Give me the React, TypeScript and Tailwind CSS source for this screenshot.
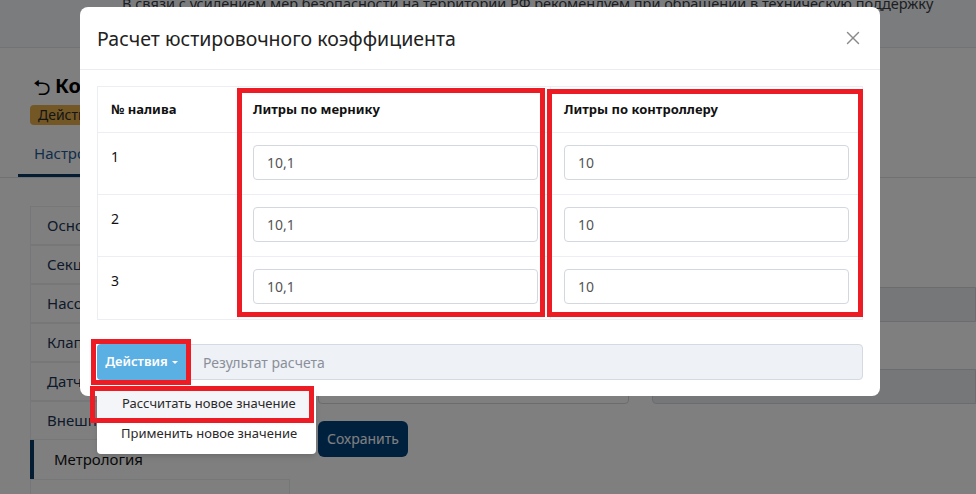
import { X } from 'lucide-react';

const rows = [
  { n: '1', a: '10,1', b: '10' },
  { n: '2', a: '10,1', b: '10' },
  { n: '3', a: '10,1', b: '10' },
];

const sideItems = ['Основные', 'Секции', 'Насосы', 'Клапаны', 'Датчики', 'Внешние'];

function BackgroundPage() {
  return (
    <div className="absolute inset-0 bg-white">
      <div className="h-[48px] bg-[#f6f8fc] border-b border-[#e4e7ec] overflow-hidden">
        <p className="pl-[122px] -mt-[7px] text-[14.5px] text-[#3a3d42] whitespace-nowrap">
          В связи с усилением мер безопасности на территории РФ рекомендуем при обращении в техническую поддержку
        </p>
      </div>
      <div className="pl-[33px] pt-[23px] flex items-center gap-1">
        <span className="text-[22px] text-black leading-none">⮌</span>
        <span className="text-[20px] font-bold text-black">Контроллер</span>
      </div>
      <div className="ml-[30px] mt-[4px] inline-block bg-[#e6b04a] rounded px-2 text-[14px] leading-[20px] text-[#2b2b2b]">
        Действует
      </div>
      <div className="mt-[16px] border-b border-[#dfe3ea] flex">
        <div className="ml-[18px] px-4 pb-[9px] border-b-[3px] border-[#0b3a66] text-[15px] text-[#1f5a96]">
          Настройки
        </div>
      </div>
      <div className="flex gap-[28px] pt-[28px]">
        <div className="ml-[30px] w-[260px] flex flex-col">
          {sideItems.map((s) => (
            <div key={s} className="h-[39px] border border-[#eceef2] flex items-center pl-[16px] text-[15px] text-[#1d3557]">
              {s}
            </div>
          ))}
          <div className="h-[39px] border-l-[4px] border-[#0b3a66] flex items-center pl-[20px] text-[15px] text-[#111] bg-white">
            Метрология
          </div>
          <div className="h-[39px] border border-[#eceef2]" />
        </div>
        <div className="flex-1 flex flex-col pt-[81px]">
          <div className="h-[35px] flex gap-[23px]">
            <div className="w-[311px] border border-[#d5d9e0] rounded" />
            <div className="flex-1 border border-[#d5d9e0] rounded-l bg-[#eceef2]" />
          </div>
          <div className="h-[35px] flex gap-[23px] mt-[47px]">
            <div className="w-[311px] border border-[#d5d9e0] rounded" />
            <div className="flex-1 border border-[#d5d9e0] rounded-l bg-[#eceef2]" />
          </div>
          <div className="mt-[17px]">
            <button className="h-[36px] w-[90px] rounded-md bg-[#01427c] text-white text-[14px]">Сохранить</button>
          </div>
        </div>
      </div>
    </div>
  );
}

export default function App() {
  return (
    <div className="relative w-[976px] h-[494px] overflow-hidden" style={{ fontFamily: '"Noto Sans", "Open Sans", sans-serif' }}>
      <BackgroundPage />
      <div className="absolute inset-0 bg-black/50" />

      <div className="absolute left-[80px] top-[7px] w-[800px] bg-white rounded-lg">
        <div className="h-[63px] border-b border-[#e9ecf1] flex items-center justify-between pl-[17px] pr-[16px]">
          <h2 className="text-[19.5px] text-[#222] mt-[1px]">Расчет юстировочного коэффициента</h2>
          <X className="w-[22px] h-[22px] text-[#8a8a8a]" strokeWidth={1.5} />
        </div>

        <div className="px-[17px] pt-[16px] pb-[16px]">
          <div className="relative border border-[#eceef4]">
            <div className="grid grid-cols-[140px_1fr_1fr] h-[46px] border-b border-[#eceef4] text-[13px] font-bold text-[#111]">
              <div className="flex items-center pl-[13px]">№ налива</div>
              <div className="flex items-center pl-[14px] border-l border-[#eceef4]">Литры по мернику</div>
              <div className="flex items-center pl-[13px] border-l border-[#eceef4]">Литры по контроллеру</div>
            </div>
            {rows.map((r, i) => (
              <div key={r.n} className={`grid grid-cols-[140px_1fr_1fr] h-[62px] text-[14px] ${i < 2 ? 'border-b border-[#eceef4]' : ''}`}>
                <div className="pl-[13px] pt-[13px] text-[#111]">{r.n}</div>
                <div className="pl-[14px] pr-[12px] pt-[12px] border-l border-[#eceef4]">
                  <div className="h-[35px] border border-[#d3d7de] rounded flex items-center pl-[13px] text-[#555]">{r.a}</div>
                </div>
                <div className="pl-[13px] pr-[13px] pt-[12px] border-l border-[#eceef4]">
                  <div className="h-[35px] border border-[#d3d7de] rounded flex items-center pl-[13px] text-[#555]">{r.b}</div>
                </div>
              </div>
            ))}
            <div className="absolute left-[139px] top-[1px] w-[308px] bottom-[2px] border-[5px] border-[#ed1c24]" />
            <div className="absolute left-[449px] top-[2px] right-[-1px] bottom-[2px] border-[5px] border-[#ed1c24]" />
          </div>

          <div className="relative mt-[24px] flex h-[36px]">
            <button className="w-[90px] bg-[#5aafe3] text-white text-[13px] font-semibold flex items-center justify-center gap-[3px] rounded-l">
              Действия
              <svg width="8" height="5" viewBox="0 0 8 5"><path d="M1 1h6L4 4z" fill="white" /></svg>
            </button>
            <div className="flex-1 bg-[#eef1f6] border border-[#d5d9e1] rounded-r flex items-center pl-[15px] text-[14px] text-[#8a8f99]">
              Результат расчета
            </div>
            <div className="absolute left-[-6px] top-[-5px] w-[100px] h-[46px] border-[5px] border-[#ed1c24]" />
          </div>
        </div>
      </div>

      <div className="absolute left-[97px] top-[386px] w-[219px] bg-white rounded shadow-md py-[4px] text-[13px] text-[#2a2a2a]">
        <div className="h-[28px] mr-[7px] flex items-center pl-[25px] bg-[#f4f5f8]">Рассчитать новое значение</div>
        <div className="h-[32px] flex items-center pl-[24px]">Применить новое значение</div>
      </div>
      <div className="absolute left-[90px] top-[386px] w-[224px] h-[37px] border-[5px] border-[#ed1c24]" />
    </div>
  );
}
